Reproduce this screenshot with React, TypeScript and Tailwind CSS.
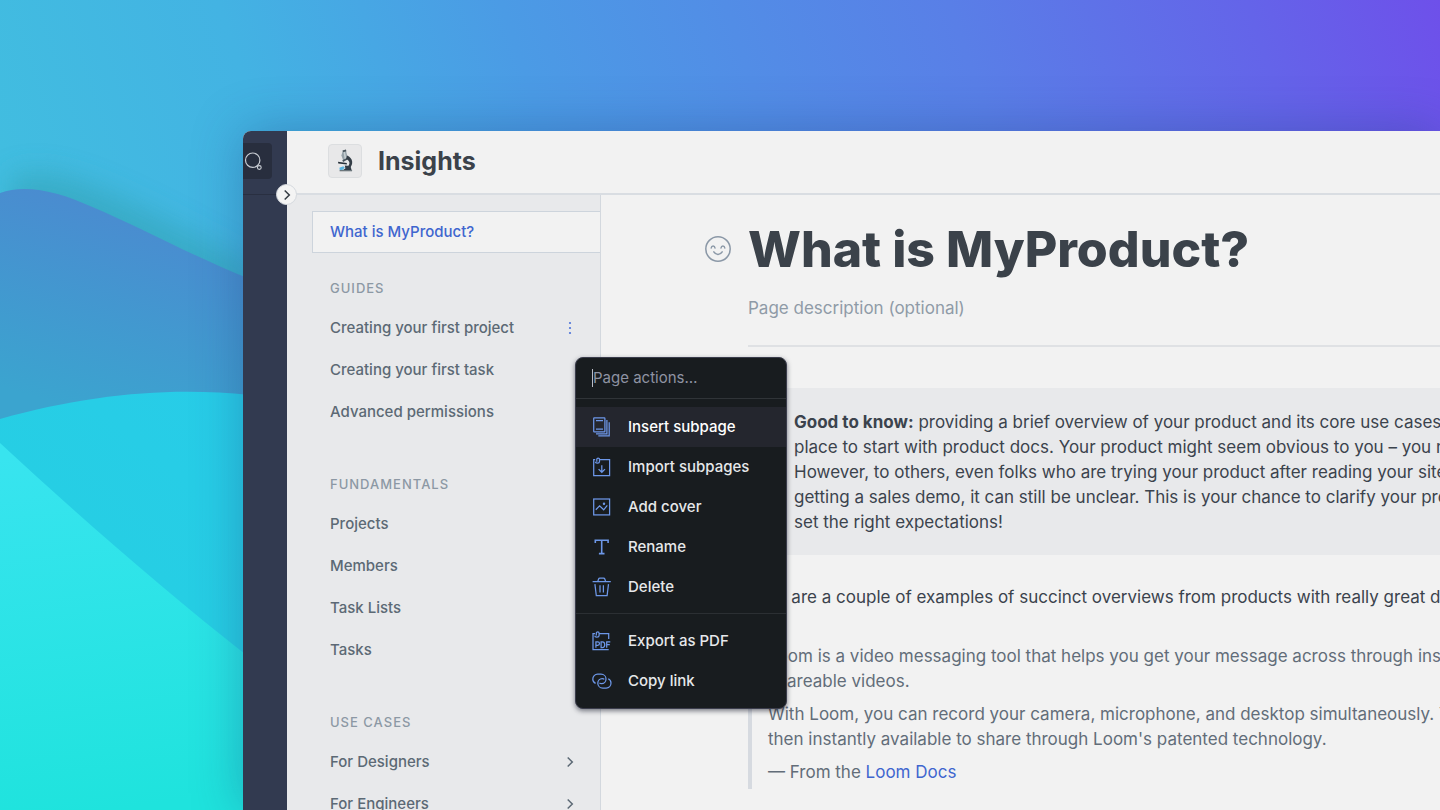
import type { ReactNode } from "react";

function Backdrop() {
  return (
    <svg
      aria-hidden="true"
      className="absolute inset-0 h-full w-full"
      viewBox="0 0 1440 810"
      preserveAspectRatio="xMinYMin slice"
    >
      <defs>
        <linearGradient id="sky" gradientUnits="userSpaceOnUse" x1="60" y1="330" x2="1400" y2="-120">
          <stop offset="0" stopColor="#41bde0" />
          <stop offset="0.18" stopColor="#43b3e3" />
          <stop offset="0.37" stopColor="#4b9be5" />
          <stop offset="0.67" stopColor="#597fe7" />
          <stop offset="0.87" stopColor="#6464e9" />
          <stop offset="1" stopColor="#6e50ea" />
        </linearGradient>
        <linearGradient id="far" gradientUnits="userSpaceOnUse" x1="140" y1="200" x2="80" y2="410">
          <stop offset="0" stopColor="#4b8ad0" />
          <stop offset="1" stopColor="#3ba4cf" />
        </linearGradient>
        <linearGradient id="mid" gradientUnits="userSpaceOnUse" x1="240" y1="400" x2="60" y2="620">
          <stop offset="0" stopColor="#28cce8" />
          <stop offset="1" stopColor="#25cfe2" />
        </linearGradient>
        <linearGradient id="near" gradientUnits="userSpaceOnUse" x1="60" y1="450" x2="110" y2="810">
          <stop offset="0" stopColor="#38e4ef" />
          <stop offset="1" stopColor="#1fe3dd" />
        </linearGradient>
        <filter id="soft" x="-30%" y="-30%" width="160%" height="160%">
          <feGaussianBlur stdDeviation="14" />
        </filter>
      </defs>
      <rect width="1440" height="810" fill="url(#sky)" />
      <path
        d="M10 178C50 160 110 190 250 264V420H10Z"
        fill="#36a6bb"
        opacity="0.7"
        filter="url(#soft)"
      />
      <path d="M0 193C26 183 62 193 90 206C140 227 190 255 250 279V810H0Z" fill="url(#far)" />
      <path d="M0 419C90 394 170 387 250 395V810H0Z" fill="url(#mid)" />
      <path d="M0 443C80 517 160 587 250 658V810H0Z" fill="url(#near)" />
    </svg>
  );
}

function Glyph({ children }: { children: ReactNode }) {
  return (
    <svg
      aria-hidden="true"
      className="h-5 w-5 shrink-0 text-[#6d97e8]"
      viewBox="0 0 20 20"
      fill="none"
      stroke="currentColor"
      strokeWidth="1.25"
    >
      {children}
    </svg>
  );
}

const icons = {
  insert: (
    <Glyph>
      <rect x="1.7" y="0.9" width="11.2" height="14" rx="0.6" />
      <path d="M4 3.7h7M4 12.1h7M4 16.9h10.9V3M6.3 18.8h10.9V5.2" />
    </Glyph>
  ),
  import: (
    <Glyph>
      <path d="M7.5 2.7h10.1v15.8H1.7V2.7h1.5M3.3 4.8c.2 1.8 4.2 1.8 4.2-.3V2.3C7.5.7 4.8.7 4.8 2.3v2.4" />
      <path d="M9.8 8.3v6.8M6.6 12.1l3.2 3.2 3.2-3.2" />
    </Glyph>
  ),
  cover: (
    <Glyph>
      <rect x="1.7" y="2" width="15.9" height="15.9" />
      <path d="M3.8 12.8l3.8-4 4.1 4 3.6-4.5" />
      <circle cx="12" cy="6.8" r="0.6" fill="currentColor" />
    </Glyph>
  ),
  rename: (
    <Glyph>
      <path d="M3.3 6V3.2h12.8V6M9.7 3.2v13.2M6.9 16.6h5.6" strokeWidth="1.6" />
    </Glyph>
  ),
  remove: (
    <Glyph>
      <path d="M.6 4.5h18.2M5.8 4.4l.8-2.4q.3-.9 1.2-.9h3.8q.9 0 1.2.9l.8 2.4M2.9 7.2l1.4 11.3h10.8l1.4-11.3M8 8.2v7.2M11.4 8.2v7.2" />
    </Glyph>
  ),
  pdf: (
    <Glyph>
      <path d="M7.3 2.7h9.4v5.2M3 2.7H1v16h15.7M2.7 4.7c.2 1.8 4.4 1.8 4.4-.3V2.2C7.1.5 4.3.5 4.3 2.2v2.4" />
      <path d="M3.9 16.7v-5.8h1.8c2.4 0 2.4 3.4 0 3.4H3.9M9.1 10.9v5.6h1.3c3.1 0 3.1-5.6 0-5.6ZM14.7 16.7v-5.8h3.6M14.7 13.7h3.1" />
    </Glyph>
  ),
  link: (
    <Glyph>
      <path d="M3.6 12.4C1.8 11.6.8 10 .8 8.2c0-2.9 2.1-5 4.8-5H9c2.9 0 5 2.2 5 4.8s-2 4.7-4.4 4.7c-1 0-1.7-.3-2.1-.8" />
      <path d="M16.2 7.8c1.8.8 2.8 2.4 2.8 4.2 0 2.9-2.1 5-4.8 5h-3.4c-2.9 0-5-2.2-5-4.8s2-4.7 4.4-4.7c1 0 1.7.3 2.1.8" />
    </Glyph>
  ),
};

function Microscope() {
  return (
    <svg aria-hidden="true" className="h-6 w-6" viewBox="0 0 24 24">
      <path d="M9.8 1.4l3-.7 2.1 8.7-4.7 2.2-1.8-5.1Z" fill="#96a2a9" />
      <path d="M10.3 1.3l1.3-.3 1.8 8.9-1.7.8Z" fill="#c5ced1" />
      <path d="M9.5 1.5l3.4-1 .5 1.7-3.2 1ZM9.3 11.3l4.7-2.2.6 1.4-4.5 2.4Z" fill="#4a555d" />
      <path d="M14 6.5c6 2.1 7 9.2 2.3 12.8l-2.2-1c3.4-3.1 3.2-6.3-.9-8.3Z" fill="#353e47" />
      <path d="M5 12.8l8.8 1.2v1.6L5.3 14.5Z" fill="#28313a" />
      <path d="M11.8 16.6l5.6.5 1.2 4H10l2.4-1.7Z" fill="#343e48" />
      <path d="M6.4 18.8l3.9-1.5 1.5 1.5-2.4 2.3H6.7Z" fill="#5db5df" />
      <path d="M6.6 21h12.5v1.3H6.6Z" fill="#6c777d" />
    </svg>
  );
}

function Chevron() {
  return (
    <svg aria-hidden="true" className="h-3 w-3" viewBox="0 0 12 12" fill="none" stroke="currentColor" strokeWidth="1.5">
      <path d="M3.7 1.5L8.3 6l-4.6 4.5" />
    </svg>
  );
}

type Page = { label: string; more?: boolean; nested?: boolean };

const groups: { title: string; pages: Page[] }[] = [
  {
    title: "Guides",
    pages: [
      { label: "Creating your first project", more: true },
      { label: "Creating your first task" },
      { label: "Advanced permissions" },
    ],
  },
  {
    title: "Fundamentals",
    pages: [{ label: "Projects" }, { label: "Members" }, { label: "Task Lists" }, { label: "Tasks" }],
  },
  {
    title: "Use cases",
    pages: [
      { label: "For Designers", nested: true },
      { label: "For Engineers", nested: true },
    ],
  },
];

function MenuItem({ icon, label, active }: { icon: ReactNode; label: string; active?: boolean }) {
  return (
    <button
      type="button"
      role="menuitem"
      className={
        active
          ? "flex h-10 w-full items-center gap-4 bg-[#24262e] px-4 text-left text-white"
          : "flex h-10 w-full items-center gap-4 px-4 text-left"
      }
    >
      {icon}
      {label}
    </button>
  );
}

function ActionsMenu() {
  return (
    <div
      role="menu"
      aria-label="Page actions"
      className="absolute left-[245px] top-[29px] z-20 w-[212px] overflow-hidden rounded-lg border border-[#3b3d4c] bg-[#181c1f] pb-[7px] text-[15px] font-medium text-[#e6e8ea] shadow-[0_2px_5px_rgba(20,24,40,0.55)]"
    >
      <div className="flex h-[41px] items-center border-b border-[#303438] px-4">
        <span className="h-[18px] w-px bg-[#b9bcc6]" />
        <input
          aria-label="Page actions"
          placeholder="Page actions…"
          className="w-full min-w-0 bg-transparent font-normal outline-none placeholder:text-[#8f93a3]"
        />
      </div>
      <div className="mb-[7px] mt-2 border-b border-[#2b2f33] pb-[6px]">
        <MenuItem icon={icons.insert} label="Insert subpage" active />
        <MenuItem icon={icons.import} label="Import subpages" />
        <MenuItem icon={icons.cover} label="Add cover" />
        <MenuItem icon={icons.rename} label="Rename" />
        <MenuItem icon={icons.remove} label="Delete" />
      </div>
      <MenuItem icon={icons.pdf} label="Export as PDF" />
      <MenuItem icon={icons.link} label="Copy link" />
    </div>
  );
}

function Sidebar() {
  return (
    <nav
      aria-label="Pages"
      className="w-[314px] shrink-0 border-r border-[#d3d8de] bg-[#e8e9eb] pl-[25px] pt-4 text-[15px] font-medium text-[#5c6975]"
    >
      <a
        href="#overview"
        aria-current="page"
        className="flex h-[42px] items-center border border-r-0 border-[#cdd4dc] bg-[#f2f2f2] pl-[17px] text-[#3f66cf]"
      >
        What is MyProduct?
      </a>
      {groups.map((group) => (
        <section key={group.title} className="mb-4 pl-[18px] pt-[25px]">
          <h2 className="mb-[9px] text-[13px] font-medium uppercase leading-5 tracking-[1px] text-[#8c98a4]">
            {group.title}
          </h2>
          <ul>
            {group.pages.map((page) => (
              <li key={page.label} className="relative flex h-[42px] items-center justify-between pr-6">
                <a href="#page">{page.label}</a>
                {page.more && (
                  <>
                    <button type="button" aria-label="Page actions" className="flex w-3 justify-center">
                      <svg aria-hidden="true" className="h-4 w-1" viewBox="0 0 4 16" fill="#4d74d9">
                        <circle cx="2" cy="3" r="1.1" />
                        <circle cx="2" cy="8" r="1.1" />
                        <circle cx="2" cy="13" r="1.1" />
                      </svg>
                    </button>
                    <div className="absolute left-0 top-[21px]">
                      <ActionsMenu />
                    </div>
                  </>
                )}
                {page.nested && <Chevron />}
              </li>
            ))}
          </ul>
        </section>
      ))}
    </nav>
  );
}

function Article() {
  return (
    <main className="min-w-0 flex-1 overflow-hidden pl-[147px] pt-6 text-[17px] leading-[25px] text-[#3b434d]">
      <div className="relative">
        <button type="button" aria-label="Add icon" className="absolute -left-11 top-4">
          <svg
            aria-hidden="true"
            className="h-7 w-7 text-[#8b98a7]"
            viewBox="0 0 28 28"
            fill="none"
            stroke="currentColor"
            strokeWidth="1.5"
            strokeLinecap="round"
          >
            <circle cx="14" cy="14" r="12.2" />
            <path d="M7.2 13c.4-2.6 3.4-2.6 3.8 0M17 13c.4-2.6 3.4-2.6 3.8 0M9.8 16.9c2 3.3 6.4 3.3 8.4 0" />
          </svg>
        </button>
        <h1 className="whitespace-nowrap text-[50px] font-extrabold leading-[60px] text-[#3b424a]">
          What is MyProduct?
        </h1>
      </div>
      <p className="mt-[17px] border-b-2 border-[#dfe1e4] pb-6 text-[#8f9ba7]">Page description (optional)</p>
      <div className="mt-[41px] flex whitespace-nowrap bg-[#e8e9eb] pb-5 pl-[46px] pt-[22px]">
        <p>
          <strong className="font-bold">Good to know:</strong> providing a brief overview of your product and its core use
          cases is a great
          <br />
          place to start with product docs. Your product might seem obvious to you – you made it!
          <br />
          However, to others, even folks who are trying your product after reading your site or
          <br />
          getting a sales demo, it can still be unclear. This is your chance to clarify your product and
          <br />
          set the right expectations!
        </p>
      </div>
      <p className="mt-[30px] whitespace-nowrap">
        Here are a couple of examples of succinct overviews from products with really great docs:
      </p>
      <blockquote className="mt-[26px] flex flex-col gap-2 whitespace-nowrap border-l-4 border-[#d6dae0] pb-1 pl-4 pt-2 text-[#626d79]">
        <p>
          Loom is a video messaging tool that helps you get your message across through instantly
          <br />
          shareable videos.
        </p>
        <p>
          With Loom, you can record your camera, microphone, and desktop simultaneously. Your video is
          <br />
          then instantly available to share through Loom's patented technology.
        </p>
        <p>
          — From the{" "}
          <a href="#loom" className="text-[#3f66cf]">
            Loom Docs
          </a>
        </p>
      </blockquote>
    </main>
  );
}

export default function App() {
  return (
    <div className="relative flex h-screen overflow-hidden pl-[243px] pt-[131px] font-['Inter',sans-serif]">
      <Backdrop />
      <div className="relative flex min-w-0 flex-1 rounded-tl-lg bg-[#f2f2f2] shadow-[0_0_50px_rgba(30,60,120,0.35)]">
        <aside className="relative w-11 shrink-0 rounded-tl-lg bg-[#323a50]">
          <div className="flex h-16 items-center border-b border-[#292f41] pb-1">
            <button
              type="button"
              aria-label="Search"
              className="flex h-9 w-[29px] items-center rounded-r bg-[#282e3e] text-[#c9cdd4]"
            >
              <svg aria-hidden="true" className="h-5 w-5" viewBox="0 0 20 20" fill="none" stroke="currentColor">
                <circle cx="9.7" cy="9.2" r="7.2" strokeWidth="1.2" />
                <circle cx="16.3" cy="16.5" r="1.9" strokeWidth="1.1" />
              </svg>
            </button>
          </div>
          <button
            type="button"
            aria-label="Expand navigation"
            className="absolute -right-2.5 top-[53px] z-10 flex h-[21px] w-[21px] items-center justify-center rounded-full border border-[#d5d9de] bg-[#f4f4f4] text-[#343b43]"
          >
            <Chevron />
          </button>
        </aside>
        <div className="flex min-w-0 flex-1 flex-col">
          <header className="flex h-16 shrink-0 items-center gap-4 border-b-2 border-[#d9dde2] pb-[3px] pl-[41px]">
            <button
              type="button"
              aria-label="Space icon"
              className="flex h-[34px] w-[34px] items-center justify-center rounded border border-[#dcdee0] bg-[#e8e8e9]"
            >
              <Microscope />
            </button>
            <div className="text-[25px] font-bold leading-8 text-[#3b424a]">Insights</div>
          </header>
          <div className="flex min-h-0 flex-1">
            <Sidebar />
            <Article />
          </div>
        </div>
      </div>
    </div>
  );
}
